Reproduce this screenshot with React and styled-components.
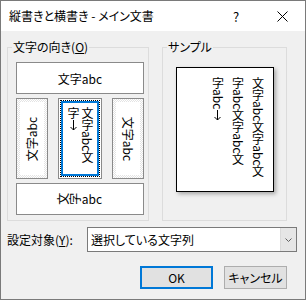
import React from 'react'
import styled, { createGlobalStyle } from 'styled-components'

const GlobalStyle = createGlobalStyle`
	html, body {
		margin: 0;
		padding: 0;
		background: #fff;
	}
	body {
		font-family: "Noto Sans CJK JP", "Noto Sans", sans-serif;
		font-size: 12px;
		font-feature-settings: "palt";
		color: #000;
	}
`

const checker = `repeating-conic-gradient(#e4e4e4 0% 25%, #fff 0% 50%) 0 0 / 2px 2px`

const Window = styled.div`
	width: 306px;
	height: 300px;
	box-sizing: border-box;
	border: 1px solid #7a7a7a;
	background: #f0f0f0;
	display: flex;
	flex-direction: column;
`

const TitleBar = styled.div`
	height: 30px;
	flex: none;
	background: #fff;
	display: flex;
	align-items: center;
	padding-left: 8px;
`

const TitleText = styled.div`
	flex-grow: 1;
	line-height: 16px;
`

const TitleButton = styled.div`
	width: 46px;
	height: 30px;
	display: flex;
	align-items: center;
	justify-content: center;
	font-size: 13px;
`

const Body = styled.div`
	flex-grow: 1;
	display: flex;
	flex-direction: column;
	padding: 8px 8px 0 6px;
`

const GroupRow = styled.div`
	display: flex;
	gap: 13px;
`

const Group = styled.fieldset`
	margin: 0;
	padding: 0;
	min-width: 0;
	box-sizing: border-box;
	width: ${props => props.$width}px;
	height: 182px;
	border: 1px solid #dcdcdc;
`

const Legend = styled.legend`
	margin-left: 4px;
	padding: 0 1px;
	line-height: 16px;
`

const Key = styled.span`
	text-decoration: underline;
`

const OrientationList = styled.div`
	display: flex;
	flex-direction: column;
	gap: 4px;
	padding: 7px 4px 0 8px;
`

const WideOption = styled.div`
	height: 32px;
	box-sizing: border-box;
	border: 1px solid #8a8a8a;
	background: #fff;
	display: flex;
	align-items: center;
	justify-content: center;
	overflow: hidden;
`

const TallRow = styled.div`
	height: 81px;
	display: flex;
	justify-content: space-between;
`

const TallOption = styled.div`
	width: ${props => (props.$selected ? 44 : 32)}px;
	box-sizing: border-box;
	border: 1px solid #8a8a8a;
	padding: ${props => (props.$selected ? '1px' : '3px')};
	background: ${props => (props.$selected ? '#fff' : checker)};
	display: flex;
`

const Face = styled.div`
	flex-grow: 1;
	background: #fff;
	display: flex;
	align-items: center;
	justify-content: center;
	overflow: hidden;
`

const FocusRing = styled.div`
	flex-grow: 1;
	border: 1px dotted #000;
	display: flex;
`

const Selection = styled.div`
	flex-grow: 1;
	border: 2px solid #0078d7;
	background: #fff;
	display: flex;
	justify-content: center;
	padding-top: 4px;
	overflow: hidden;
`

const Turned = styled.span`
	display: inline-block;
	white-space: nowrap;
	line-height: 14px;
	transform: rotate(${props => props.$deg}deg);
`

const VerticalText = styled.div`
	writing-mode: vertical-rl;
	white-space: nowrap;
	font-feature-settings: normal;
	line-height: ${props => props.$line || 14}px;
`

const ArrowMark = styled.svg`
	display: inline-block;
	width: 7px;
	height: 11px;
	margin-top: 1px;
`

const DownArrow = () => (
	<ArrowMark viewBox="0 0 7 11">
		<path d="M3.5 0 V10 M0.5 7 L3.5 10 L6.5 7" stroke="#000" strokeWidth="1" fill="none" />
	</ArrowMark>
)

const SampleArea = styled.div`
	display: flex;
	justify-content: center;
	padding-top: 12px;
`

const SamplePage = styled.div`
	width: 98px;
	height: 125px;
	box-sizing: border-box;
	border: 1px solid #000;
	background: #fff;
	box-shadow: 2px 2px 4px rgba(0, 0, 0, 0.3);
	padding: 9px 5px 0 0;
	display: flex;
	justify-content: flex-end;
`

const FieldRow = styled.div`
	display: flex;
	align-items: center;
	height: 25px;
	margin-top: 6px;
`

const FieldLabel = styled.label`
	width: 80px;
	flex: none;
`

const Select = styled.div`
	flex-grow: 1;
	height: 25px;
	box-sizing: border-box;
	border: 1px solid #7a7a7a;
	background: #fff;
	display: flex;
`

const SelectValue = styled.div`
	flex-grow: 1;
	display: flex;
	align-items: center;
	padding-left: 3px;
`

const DropButton = styled.div`
	width: 15px;
	background: #e6e6e6;
	border-left: 1px solid #dadada;
	display: flex;
	align-items: center;
	justify-content: center;
`

const ButtonRow = styled.div`
	display: flex;
	justify-content: flex-end;
	gap: 11px;
	margin-top: 14px;
	padding-right: 10px;
`

const Button = styled.button`
	width: ${props => props.$width}px;
	height: 23px;
	box-sizing: border-box;
	margin: 0;
	padding: 0;
	font: inherit;
	color: #000;
	background: #e1e1e1;
	border: ${props => (props.$primary ? '2px solid #0078d7' : '1px solid #adadad')};
`

export default function App() {
	return (
		<>
			<GlobalStyle />
			<Window>
				<TitleBar>
					<TitleText>縦書きと横書き - メイン文書</TitleText>
					<TitleButton>?</TitleButton>
					<TitleButton>
						<svg width="11" height="11" viewBox="0 0 11 11">
							<path d="M0.5 0.5 L10.5 10.5 M10.5 0.5 L0.5 10.5" stroke="#000" strokeWidth="1" />
						</svg>
					</TitleButton>
				</TitleBar>
				<Body>
					<GroupRow>
						<Group $width={142}>
							<Legend>
								文字の向き(<Key>O</Key>)
							</Legend>
							<OrientationList>
								<WideOption>文字abc</WideOption>
								<TallRow>
									<TallOption>
										<Face>
											<Turned $deg={-90}>文字abc</Turned>
										</Face>
									</TallOption>
									<TallOption $selected>
										<FocusRing>
											<Selection>
												<VerticalText>
													文字abc文
													<br />
													字<DownArrow />
												</VerticalText>
											</Selection>
										</FocusRing>
									</TallOption>
									<TallOption>
										<Face>
											<Turned $deg={90}>文字abc</Turned>
										</Face>
									</TallOption>
								</TallRow>
								<WideOption>
									<Turned $deg={-90}>
										<VerticalText>文字abc</VerticalText>
									</Turned>
								</WideOption>
							</OrientationList>
						</Group>
						<Group $width={125}>
							<Legend>サンプル</Legend>
							<SampleArea>
								<SamplePage>
									<VerticalText $line={20}>
										文字abc文字abc文
										<br />
										字abc文字abc文
										<br />
										字abc<DownArrow />
									</VerticalText>
								</SamplePage>
							</SampleArea>
						</Group>
					</GroupRow>
					<FieldRow>
						<FieldLabel>
							設定対象(<Key>Y</Key>):
						</FieldLabel>
						<Select>
							<SelectValue>選択している文字列</SelectValue>
							<DropButton>
								<svg width="7" height="4" viewBox="0 0 7 4">
									<path d="M0.5 0.5 L3.5 3.5 L6.5 0.5" stroke="#606060" fill="none" strokeWidth="1" />
								</svg>
							</DropButton>
						</Select>
					</FieldRow>
					<ButtonRow>
						<Button $primary $width={73}>OK</Button>
						<Button $width={63}>キャンセル</Button>
					</ButtonRow>
				</Body>
			</Window>
		</>
	)
}
